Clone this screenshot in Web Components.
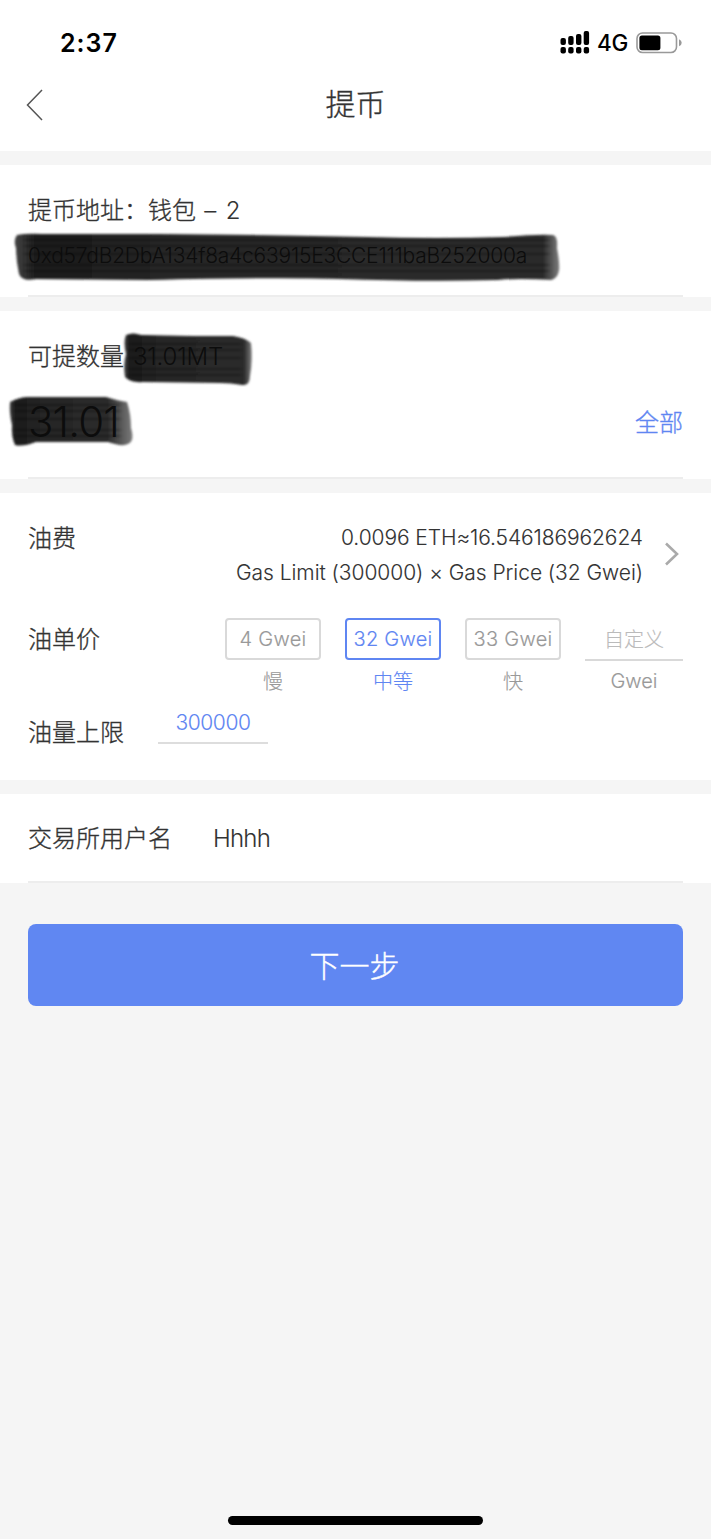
<!DOCTYPE html>
<html lang="zh-CN">
<head>
<meta charset="utf-8">
<title>提币</title>
<style>
body{margin:0;background:#f5f5f5;color:#333;font-family:Inter,"Noto Sans CJK SC",sans-serif;font-size:24px}
</style>
</head>
<body>
<withdraw-page></withdraw-page>
<script>
const define = (name, html, setup) => {
  const tpl = document.createElement('template');
  tpl.innerHTML = html;
  customElements.define(name, class extends HTMLElement {
    constructor() {
      super();
      this.attachShadow({mode: 'open'}).append(tpl.content.cloneNode(true));
    }
    connectedCallback() { if (setup) setup(this, this.shadowRoot); }
  });
};

// Text with an optional set width, reached by spacing its letters evenly.
define('fit-text', `<style>:host{display:block;white-space:pre;line-height:1}span{display:inline-block}</style><span><slot></slot></span>`, (el, root) => {
  const w = +el.getAttribute('width');
  if (!w) return;
  const span = root.querySelector('span');
  const n = el.textContent.length;
  const gap = (w - span.getBoundingClientRect().width) / n;
  span.style.letterSpacing = gap + 'px';
});

define('status-bar', `<style>
:host{display:flex;height:86px;box-sizing:border-box;padding:0 28px 0 60px;align-items:center;justify-content:space-between;color:#000;-webkit-text-stroke:0}
.time{font-size:25px;font-weight:600}.right{display:flex;align-items:center}
.net{font-size:22.5px;font-weight:500;margin:0 8px 0 7px}
svg{display:block}
</style>
<fit-text class="time" width="58">2:37</fit-text>
<div class="right">
<svg style="margin-top:-3px" width="30" height="24" viewBox="0 0 30 24"><g fill="#000"><rect x=".5" y="8" width="5.4" height="7" rx="2"/><rect x="8.2" y="6" width="5.4" height="9" rx="2"/><rect x="16" y="4" width="5.4" height="11" rx="2"/><rect x="23.7" y="1" width="5.4" height="14" rx="2"/><rect x=".5" y="17" width="5.4" height="6.4" rx="2"/><rect x="8.2" y="17" width="5.4" height="6.4" rx="2"/><rect x="16" y="17" width="5.4" height="6.4" rx="2"/><rect x="23.7" y="17" width="5.4" height="6.4" rx="2"/></g></svg>
<fit-text class="net" width="31">4G</fit-text>
<svg width="47" height="22" viewBox="0 0 47 22"><rect x="1" y="1" width="39.5" height="19.5" rx="5.5" fill="none" stroke="#999" stroke-width="1.6"/><rect x="3.4" y="3.4" width="21" height="14.8" rx="2.5"/><path d="M43 7.3q2.7 1 2.7 3.5T43 14.3z" fill="#999"/></svg>
</div>`);

define('nav-bar', `<style>
:host{display:grid;grid-template-columns:60px 1fr 60px;height:65px;align-items:start}
svg{display:block;margin:2px 0 0 25px}
.t{justify-self:center;font-size:30px;line-height:36px}
</style>
<svg width="20" height="34" viewBox="0 0 20 34"><path d="M17 2 2.5 17 17 32" fill="none" stroke="#555" stroke-width="1.5"/></svg>
<fit-text class="t"><slot></slot></fit-text>`);

define('form-section', `<style>
:host{display:block;position:relative;background:#fff;box-sizing:border-box;padding:0 28px;margin-bottom:14px}
:host([line])::after{content:"";position:absolute;left:28px;right:28px;bottom:0;height:2px;background:#ededed}
</style><slot></slot>`);

// Value covered by a soft dark marker stroke.
define('marked-value', `<style>
:host{display:block;position:relative;color:#0c0c0c;-webkit-text-stroke:0}
svg{position:absolute;overflow:visible;left:0;top:0}
.v{position:relative}
</style><svg width="1" height="1"><defs>
<linearGradient id="g"><stop offset="0" stop-color="#444"/><stop offset=".04" stop-color="#1b1b1b"/><stop offset=".3" stop-color="#272727"/><stop offset=".94" stop-color="#2b2b2b"/><stop offset="1" stop-color="#7c7c7c"/></linearGradient>
<filter id="b" x="-10%" y="-20%" width="120%" height="140%"><feGaussianBlur stdDeviation=".9"/></filter>
<filter id="s" filterUnits="userSpaceOnUse" x="-40" y="-30" width="620" height="100"><feGaussianBlur stdDeviation="2 1.2"/></filter></defs><path fill="url(#g)" filter="url(#b)"/><g fill="none" stroke="#111" stroke-opacity=".3" filter="url(#s)"></g></svg><div class="v"><slot></slot></div>`, (el, root) => {
  root.querySelector('path').setAttribute('d', el.getAttribute('shape'));
  const [x, y, w] = el.getAttribute('streak').split(' ').map(Number);
  root.querySelector('g').innerHTML = [0, 6, 14, 25, 31].map(d => `<path d="M${x} ${y + d}h${w}" stroke-width="1.8"/>`).join('');
  const fade = el.getAttribute('fade');
  if (fade) root.querySelectorAll('stop')[3].setAttribute('offset', fade);
});

define('price-option', `<style>
:host{display:block;width:96px;color:#999;text-align:center}
.box{display:flex;align-items:center;justify-content:center;height:42px;box-sizing:border-box;border:2px solid #d9d9d9;border-radius:4px;font-size:20px}
.cap{font-size:20px;line-height:24px;margin-top:10px}
:host([selected]){color:#5f86f2}:host([selected]) .box{border-color:#5f86f2}
:host([custom]){width:98px}:host([custom]) .box{border-width:0 0 2px;border-radius:0;color:#bbb;height:43px}
:host([custom]) .cap{margin-top:8px}
</style><div class="box"><slot></slot></div><div class="cap"><slot name="caption"></slot></div>`);

define('primary-button', `<style>
:host{display:block;margin:41px 28px 0}
button{display:flex;width:100%;height:82px;align-items:center;justify-content:center;border:0;padding:0 2px 3px 0;border-radius:8px;background:#6087f2;color:#fff;font:inherit;font-size:30px;-webkit-text-stroke:inherit}
</style><button><slot></slot></button>`);

define('withdraw-page', `<style>
:host{display:flex;flex-direction:column;height:1539px;font-weight:300;-webkit-text-stroke:.35px currentColor}
.top{background:#fff;margin-bottom:14px}
.row{display:flex;align-items:center}
.addr{height:132px;padding-top:31px}.amount{height:168px;padding-top:31px}
.gas{height:287px;padding-top:27px}.user{height:89px;margin:0}
.l{line-height:30px}
.latin{-webkit-text-stroke:.1px currentColor}
.address{font-size:21px;line-height:30px}
.big{font-size:42px;line-height:48px}
.all{color:#5f86f2;line-height:30px}
.between{justify-content:space-between}
.fee{align-items:flex-start;height:98px}
.detail{margin-left:auto;display:flex;flex-direction:column;align-items:flex-end;font-size:21px;-webkit-text-stroke:.1px currentColor}
.detail fit-text{line-height:35px}
.chev{display:block;margin:21px 3px 0 20px}
.price{align-items:flex-start;height:86px}.price .l{margin-top:7px;flex:1}
.options{display:flex;gap:24px;-webkit-text-stroke:.15px currentColor}
.limit{align-items:flex-start}.limit .l{width:130px;margin-top:14px}
.input{width:110px;height:40px;box-sizing:border-box;border-bottom:2px solid #ddd;display:flex;justify-content:center;color:#5f86f2;-webkit-text-stroke:.1px currentColor;font-size:21px}
.input fit-text{line-height:37px}
.home{width:255px;height:9px;border-radius:5px;background:#000;margin:auto auto 14px}
</style>
<div class="top"><status-bar></status-bar><nav-bar>提币</nav-bar></div>
<form-section class="addr" line>
<div class="row"><fit-text class="l" style="width:168px">提币地址：钱包</fit-text><fit-text class="l latin" width="46"> – 2</fit-text></div>
<marked-value style="margin-top:15px" fade=".97" streak="-4 -1 525" shape="M-11-6Q-2-8 14-7H130Q260-6 340-4Q410-2 475-4Q510-7 525-6Q530-5 529 7Q532 23 531 30Q529 38 523 39Q490 37 470 39Q400 41 310 38Q250 36 120 39L8 38Q-6 41-9 33Q-12 19-12 7Q-15-1-11-6Z"><fit-text class="address" width="499">0xd57dB2DbA134f8a4c63915E3CCE111baB252000a</fit-text></marked-value>
</form-section>
<form-section class="amount" line>
<div class="row"><fit-text class="l" width="96">可提数量</fit-text><marked-value style="margin-left:9px" streak="-4 2 112" shape="M-7-7Q0-10 8-7L60-6H100Q113-4 118 1Q120 17 117 34Q117 44 109 43Q98 41 87 41L10 40Q-3 41-8 35Q-10 23-7 12Q-10 0-7-7Z"><fit-text class="l" width="90">31.01MT</fit-text></marked-value></div>
<div class="row between" style="margin-top:26px"><marked-value fade=".8" streak="-13 7 105" shape="M-18 4Q-8-1 0-1H78Q91 3 99 4Q103 16 103 30Q107 43 100 46Q94 49 80 44L8 44Q-5 49-13 47Q-17 38-16 27Q-19 15-18 4Z"><fit-text class="big" width="91">31.01</fit-text></marked-value><fit-text class="all" style="margin-top:1px">全部</fit-text></div>
</form-section>
<form-section class="gas">
<div class="row fee"><fit-text class="l" style="margin-top:4px">油费</fit-text><div class="detail"><fit-text width="302">0.0096 ETH≈16.546186962624</fit-text><fit-text width="407">Gas Limit (300000) × Gas Price (32 Gwei)</fit-text></div>
<svg class="chev" width="17" height="26" viewBox="0 0 17 26"><path d="M3 2.5 14 13 3 23.5" fill="none" stroke="#aaa" stroke-width="2.6"/></svg></div>
<div class="row price"><fit-text class="l">油单价</fit-text><div class="options">
<price-option><fit-text width="67">4 Gwei</fit-text><span slot="caption">慢</span></price-option>
<price-option selected><fit-text width="79">32 Gwei</fit-text><span slot="caption">中等</span></price-option>
<price-option><fit-text width="79">33 Gwei</fit-text><span slot="caption">快</span></price-option>
<price-option custom>自定义<span slot="caption">Gwei</span></price-option></div></div>
<div class="row limit"><fit-text class="l">油量上限</fit-text><div class="input"><fit-text width="75">300000</fit-text></div></div>
</form-section>
<form-section class="user" line><div class="row" style="height:90px"><fit-text style="width:185px">交易所用户名</fit-text><fit-text class="latin" width="57">Hhhh</fit-text></div></form-section>
<primary-button>下一步</primary-button>
<div class="home"></div>`);
</script>
</body>
</html>
